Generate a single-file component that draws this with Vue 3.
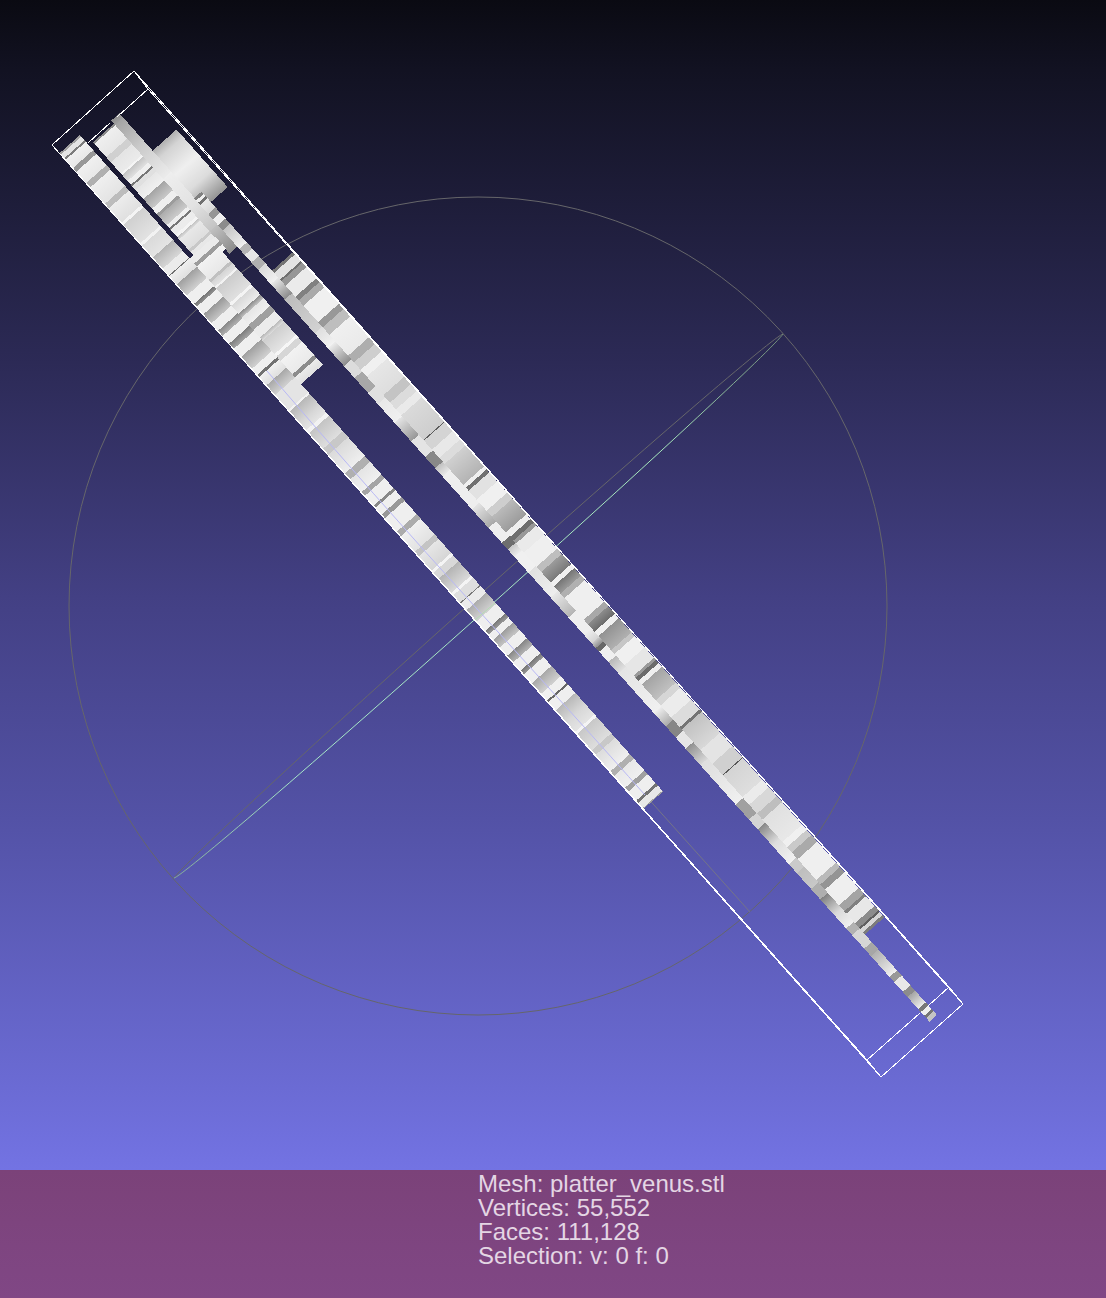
<script setup>
// Each facet is [end position along the strip, shade, optional second shade].
const F = 'efefef'
const strips = [
  {
    id: 'cylinder', start: 72, top: 7, height: 33, tilt: 0,
    facets: [[82, 'b0b0b0', 'd4d4d4'], [105, 'd4d4d4', 'efefef'], [126, 'efefef', 'dcdcdc'], [149, 'dcdcdc', '949494']],
  },
  {
    id: 'block-a', start: 26, top: 49, height: 29, tilt: 0,
    facets: [[28, '8a8a8a'], [46, F, 'e6e6e6'], [53, 'd0d0d0'], [68, 'e4e4e4', 'ebebeb'], [70, 'f4f4f4'], [78, 'c4c4c4', 'e0e0e0'], [83, F], [85, '767676'], [90, 'e0e0e0'], [102, 'e6e6e6', 'f0f0f0'], [115, 'a4a4a4', 'c8c8c8'], [122, F], [125, '9c9c9c'], [137, 'acacac', 'cccccc'], [141, F], [143, '787878'], [150, 'ececec'], [153, 'f4f4f4'], [156, 'c0c0c0', 'dcdcdc'], [170, 'e8e8e8', 'dedede'], [173, 'c8c8c8'], [178, 'e8e8e8']],
  },
  {
    id: 'rail', start: 22, top: 39, height: 11, tilt: 0,
    facets: [[28, '909090', 'a0a0a0'], [60, 'a4a4a4', 'cacaca'], [100, 'cacaca', 'ebebeb'], [140, 'eeeeee', 'e2e2e2'], [170, 'e2e2e2', 'c4c4c4'], [200, 'c0c0c0', '8c8c8c']],
  },
  {
    id: 'left', start: 12, top: 83, height: 27, tilt: 0,
    facets: [[14, 'a0a0a0'], [19, 'e4e4e4'], [21, '7c7c7c'], [32, 'f0f0f0', 'e8e8e8'], [37, '989898'], [52, 'f0f0f0', 'e8e8e8'], [58, 'b0b0b0'], [80, F, 'e4e4e4'], [86, 'bcbcbc'], [105, 'ececec', 'e0e0e0'], [108, 'f4f4f4'], [133, 'd0d0d0', 'e2e2e2'], [136, 'f2f2f2'], [152, 'dadada', 'e4e4e4'], [167, 'b4b4b4', 'd6d6d6'], [176, 'ebebeb'], [177, '707070'], [188, 'efefef', 'e0e0e0'], [203, 'a0a0a0', 'd0d0d0'], [214, F], [218, '747474', '909090'], [228, F], [240, '989898', 'c4c4c4'], [250, F], [257, '888888', 'b0b0b0'], [267, F], [274, '7c7c7c', 'a4a4a4'], [285, F], [301, 'a0a0a0', 'd0d0d0'], [309, 'f0f0f0'], [312, '727272'], [323, 'f0f0f0', 'e0e0e0'], [336, 'a8a8a8', 'd0d0d0'], [356, 'e4e4e4'], [358, 'f2f2f2'], [374, 'b8b8b8', 'd8d8d8'], [383, 'd8d8d8', 'e4e4e4'], [387, 'f2f2f2'], [408, 'c4c4c4', 'dedede'], [416, 'c8c8c8'], [441, 'dadada', 'efefef'], [449, 'b0b0b0'], [466, 'e4e4e4', 'f0f0f0'], [471, 'a4a4a4'], [484, F], [487, '888888'], [496, F], [501, '989898'], [519, F], [525, 'acacac'], [546, 'f0f0f0', 'e2e2e2'], [552, 'c4c4c4'], [571, 'e6e6e6', 'd6d6d6'], [574, 'f4f4f4'], [582, 'd8d8d8'], [601, 'b4b4b4', 'dadada'], [604, 'f4f4f4'], [614, 'dedede'], [615, '787878'], [624, 'ebebeb'], [639, 'acacac', 'd2d2d2'], [652, F], [657, '787878', '989898'], [664, F], [674, '9c9c9c', 'c4c4c4'], [685, F], [694, '868686', 'b4b4b4'], [705, F], [710, '767676', '969696'], [722, F], [736, 'a8a8a8', 'd0d0d0'], [745, 'f0f0f0'], [747, '686868'], [758, F], [774, 'b8b8b8', 'd8d8d8'], [787, 'd8d8d8', 'e4e4e4'], [790, 'f4f4f4'], [812, 'c8c8c8', 'dedede'], [818, 'c8c8c8'], [840, 'dcdcdc', 'f0f0f0'], [846, 'b0b0b0'], [862, 'e8e8e8', 'f0f0f0'], [867, 'a0a0a0'], [879, F], [882, '747474'], [889, 'e8e8e8'], [890, 'a0a0a0']],
  },
  {
    id: 'block-b-corner', start: 178, top: 49, height: 6, tilt: 0,
    facets: [[184, 'ebebeb'], [188, '9c9c9c'], [194, 'f2f2f2']],
  },
  {
    id: 'block-b', start: 177, top: 54, height: 29, tilt: 0,
    facets: [[184, 'ebebeb'], [188, '9c9c9c'], [206, 'f2f2f2', 'e8e8e8'], [209, 'c0c0c0'], [215, 'd4d4d4', 'e2e2e2'], [217, 'f2f2f2'], [237, 'cccccc', 'e0e0e0'], [240, 'f4f4f4'], [251, 'd8d8d8', 'ececec'], [256, '8c8c8c', 'c0c0c0'], [266, 'e6e6e6', 'f0f0f0'], [273, 'a0a0a0'], [283, 'ececec'], [287, 'b8b8b8', 'dcdcdc'], [305, 'cecece', 'e4e4e4'], [308, 'f6f6f6'], [314, 'd6d6d6'], [332, 'f2f2f2', 'eaeaea'], [336, '8c8c8c'], [345, 'ebebeb', 'e0e0e0']],
  },
  {
    id: 'right', start: 241, top: 1, height: 29, tilt: 0,
    facets: [[244, '747474'], [253, 'e2e2e2'], [255, '707070'], [261, '969696'], [276, 'ebebeb'], [281, '808080'], [288, 'aaaaaa'], [310, 'f0f0f0'], [317, '989898'], [327, 'bebebe'], [355, 'f0f0f0', 'eaeaea'], [364, 'aeaeae'], [374, 'cecece'], [383, 'f0f0f0'], [408, 'e6e6e6', 'dedede'], [418, 'c4c4c4'], [427, 'dcdcdc'], [435, 'eaeaea'], [468, 'dadada', 'cecece'], [469, '5c5c5c'], [481, 'd4d4d4'], [492, 'e8e8e8'], [500, 'dcdcdc'], [528, 'd0d0d0', 'b4b4b4'], [532, 'efefef'], [536, '707070'], [548, 'e2e2e2'], [563, 'f0f0f0'], [571, 'cecece'], [592, 'bababa', '9c9c9c'], [598, 'efefef'], [603, '6e6e6e'], [607, '989898'], [619, 'eaeaea'], [638, F], [645, 'bebebe'], [659, '9c9c9c', '7a7a7a'], [664, 'f0f0f0'], [674, '767676', '9a9a9a'], [680, 'b0b0b0'], [709, F], [715, 'a8a8a8'], [725, '8c8c8c', '6c6c6c'], [731, 'f0f0f0'], [750, '929292', 'b0b0b0'], [755, 'c6c6c6'], [770, 'f0f0f0'], [784, 'e6e6e6'], [787, '9a9a9a'], [791, '6c6c6c'], [796, F], [817, 'a4a4a4', 'c0c0c0'], [824, 'd6d6d6'], [840, 'ececec'], [853, 'dcdcdc'], [856, '747474'], [884, 'c2c2c2', 'd8d8d8'], [902, 'e4e4e4'], [917, 'd0d0d0'], [918, '585858'], [947, 'd4d4d4', 'dedede'], [957, 'ebebeb'], [969, 'd8d8d8'], [977, 'bebebe'], [1007, 'e0e0e0', 'e8e8e8'], [1014, 'f0f0f0'], [1021, 'cacaca'], [1030, 'aaaaaa'], [1058, F], [1064, 'bababa'], [1071, '949494'], [1092, F], [1100, 'a4a4a4'], [1103, '808080'], [1116, 'e8e8e8'], [1122, '8c8c8c'], [1124, '606060'], [1128, 'd6d6d6'], [1131, '7c7c7c']],
  },
  {
    id: 'ledge', start: 135, top: 30, height: 10, tilt: -0.15,
    facets: [[138, '808080'], [141, F], [144, '707070'], [156, 'e8e8e8', 'd8d8d8'], [163, '969696'], [171, F], [178, '8c8c8c'], [203, 'c4c4c4', 'f0f0f0'], [211, 'b4b4b4'], [221, 'e6e6e6'], [231, 'b0b0b0'], [250, 'dadada', 'f0f0f0'], [271, 'e8e8e8', '8c8c8c'], [316, 'bcbcbc', 'd2d2d2'], [336, 'dedede', 'f2f2f2'], [360, 'ececec', '8c8c8c'], [376, 'dcdcdc'], [396, 'a8a8a8'], [411, 'e0e0e0'], [436, 'e8e8e8', 'f0f0f0'], [461, 'e4e4e4', '989898'], [482, 'e4e4e4'], [497, '888888'], [508, 'c0c0c0', 'e8e8e8'], [552, 'eeeeee'], [577, 'e4e4e4', 'a8a8a8'], [597, 'eeeeee'], [606, '6e6e6e'], [616, 'c8c8c8', 'ececec'], [637, 'f0f0f0'], [670, 'e0e0e0', 'eeeeee'], [697, 'e8e8e8', 'b4b4b4'], [720, F], [732, 'eeeeee', 'd4d4d4'], [738, 'c8c8c8', '909090'], [743, '686868'], [757, F], [772, 'b8b8b8', 'e0e0e0'], [825, 'e4e4e4', 'f0f0f0'], [843, 'eeeeee', 'acacac'], [858, '868686'], [873, 'e6e6e6'], [895, '909090', 'd8d8d8'], [948, 'dedede', 'f0f0f0'], [968, 'a0a0a0'], [981, 'd4d4d4'], [1003, '888888', 'dedede'], [1028, 'dedede', 'f2f2f2'], [1040, 'cacaca'], [1061, 'bebebe', 'c8c8c8'], [1075, 'aeaeae'], [1096, '808080', 'dadada'], [1114, 'dadada', 'f0f0f0'], [1123, 'b2b2b2'], [1141, 'd6d6d6'], [1151, 'a6a6a6'], [1179, 'b0b0b0', 'f0f0f0'], [1186, '989898'], [1199, 'e8e8e8'], [1206, '8c8c8c'], [1222, 'a4a4a4', 'ececec'], [1226, '787878'], [1231, F], [1234, '767676'], [1239, 'c4c4c4']],
  },
].map((strip) => {
  let x = strip.start
  const facets = strip.facets.map(([end, from, to], i) => {
    const facet = { x, width: end - x, from: '#' + from, to: '#' + (to || from), gradient: !!to, id: `${strip.id}-${i}` }
    x = end
    return facet
  })
  return { ...strip, facets }
})

const gradients = strips.flatMap((s) => s.facets.filter((f) => f.gradient))

const info = [
  ['Mesh', 'platter_venus.stl'],
  ['Vertices', '55,552'],
  ['Faces', '111,128'],
  ['Selection', 'v: 0 f: 0'],
]
</script>

<template>
  <main class="viewer">
    <section class="viewport">
      <svg class="scene" viewBox="0 0 1106 1170" role="img" aria-label="platter_venus.stl, side view">
        <defs>
          <linearGradient v-for="g in gradients" :id="g.id" :key="g.id">
            <stop offset="0" :stop-color="g.from" />
            <stop offset="1" :stop-color="g.to" />
          </linearGradient>
          <linearGradient id="axis-green">
            <stop offset="0" stop-color="#84ac98" />
            <stop offset="0.2" stop-color="#a6e6c8" />
            <stop offset="0.8" stop-color="#a6e6bc" />
            <stop offset="1" stop-color="#6f8a78" />
          </linearGradient>
        </defs>

        <!-- trackball -->
        <g class="trackball">
          <circle cx="478" cy="606" r="409" />
          <path d="M174 878A409 8 -41.8 0 1 783 334" />
          <path class="near" d="M645 795L750 912" />
        </g>
        <path class="green" d="M174 878A409 8 -41.8 0 0 783 334" />

        <!-- mesh -->
        <g transform="translate(134 71) rotate(48.38)" shape-rendering="crispEdges">
          <g v-for="s in strips" :key="s.id" :transform="`rotate(${s.tilt})`">
            <rect
              v-for="f in s.facets"
              :key="f.id"
              :x="f.x"
              :y="s.top"
              :width="f.width"
              :height="s.height"
              :fill="f.gradient ? `url(#${f.id})` : f.from"
            />
          </g>
        </g>

        <path class="blue" d="M267 371Q374 496 478 610T645 795" />
        <path class="green faint" d="M475 620L495 603" />

        <!-- bounding box -->
        <g class="bounds">
          <path d="M134 71L963 1004L881 1077L52 145Z" />
          <path d="M134 71L148 89L949 987L963 1004M52 145L867 1060L881 1077" />
          <path d="M148 89L117 117M110 123L88 143M949 987L928 1006M920 1013L867 1060" />
        </g>
      </svg>
    </section>

    <footer class="status">
      <p v-for="[label, value] in info" :key="label">{{ label }}: {{ value }}</p>
    </footer>
  </main>
</template>

<style>
body {
  margin: 0;
}
</style>

<style scoped>
.viewer {
  display: flex;
  flex-direction: column;
  min-height: 100vh;
  font-family: "Liberation Sans", Arial, sans-serif;
}

.viewport {
  flex: 1;
  background: linear-gradient(#0a0a12 0%, #121222 6%, #2c2a56 31%, #434084 51%, #5352a6 70%, #6b6bd4 93%, #7373e3 100%);
}

.scene {
  display: block;
  width: 100%;
}

.trackball {
  fill: none;
  stroke: #66666a;
  stroke-width: 1;
}

.trackball .near {
  stroke: #747488;
}

.green {
  fill: none;
  stroke: url(#axis-green);
  stroke-width: 1;
}

.green.faint {
  stroke: #b4dcb4;
}

.blue {
  fill: none;
  stroke: #b8b8f6;
  stroke-width: 1;
}

.bounds {
  fill: none;
  stroke: #ffffff;
  stroke-width: 1;
  shape-rendering: crispEdges;
}

.status {
  box-sizing: border-box;
  min-height: 128px;
  padding: 2px 0 30px calc(50% - 75px);
  background: linear-gradient(#7b4279, #804785);
  color: #e4d6e4;
  font-size: 24px;
  line-height: 24px;
}

.status p {
  margin: 0;
}
</style>
